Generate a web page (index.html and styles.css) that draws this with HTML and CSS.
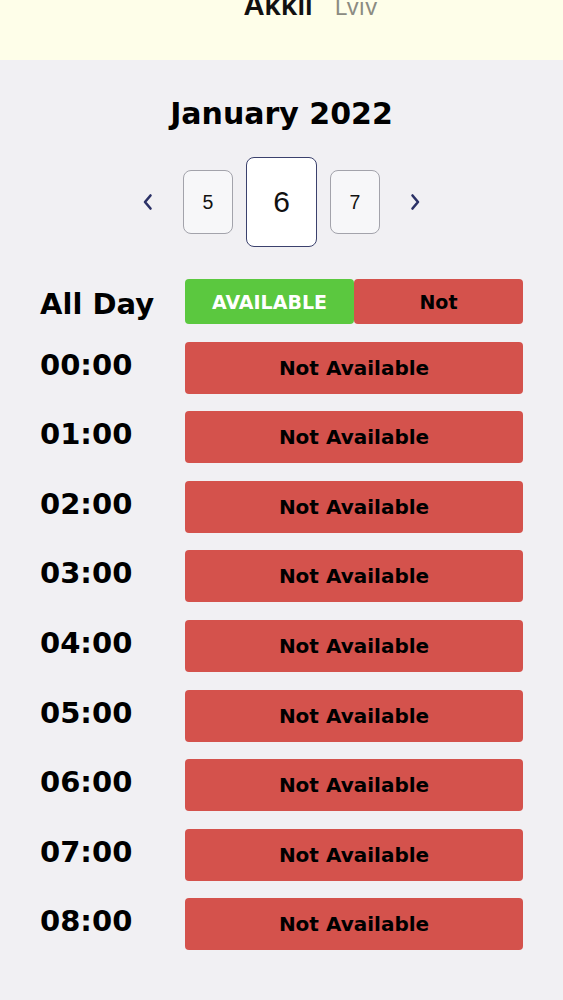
FILE: index.html
```html
<!DOCTYPE html>
<html lang="en">
<head>
<meta charset="utf-8">
<title>Availability</title>
<link rel="stylesheet" href="styles.css">
</head>
<body>
<header class="top">
  <div class="place">
    <span class="name">Akkii</span>
    <span class="city">Lviv</span>
  </div>
</header>
<main class="main">
  <h1 class="month">January 2022</h1>
  <div class="days">
    <button class="arrow arrow-prev" aria-label="Previous">
      <svg width="12" height="18" viewBox="0 0 12 18"><path d="M8.5 2.5 L3 9 L8.5 15.5" fill="none" stroke="#2b3166" stroke-width="2.6" stroke-linecap="round" stroke-linejoin="round"/></svg>
    </button>
    <div class="day">5</div>
    <div class="day day-sel">6</div>
    <div class="day">7</div>
    <button class="arrow arrow-next" aria-label="Next">
      <svg width="12" height="18" viewBox="0 0 12 18"><path d="M3.5 2.5 L9 9 L3.5 15.5" fill="none" stroke="#2b3166" stroke-width="2.6" stroke-linecap="round" stroke-linejoin="round"/></svg>
    </button>
  </div>
  <div class="slots">
    <div class="row row-all">
      <div class="label">All Day</div>
      <div class="toggle">
        <div class="tbtn tbtn-on">AVAILABLE</div>
        <div class="tbtn tbtn-off">Not</div>
      </div>
    </div>
    <div class="row"><div class="label">00:00</div><div class="slot">Not Available</div></div>
    <div class="row"><div class="label">01:00</div><div class="slot">Not Available</div></div>
    <div class="row"><div class="label">02:00</div><div class="slot">Not Available</div></div>
    <div class="row"><div class="label">03:00</div><div class="slot">Not Available</div></div>
    <div class="row"><div class="label">04:00</div><div class="slot">Not Available</div></div>
    <div class="row"><div class="label">05:00</div><div class="slot">Not Available</div></div>
    <div class="row"><div class="label">06:00</div><div class="slot">Not Available</div></div>
    <div class="row"><div class="label">07:00</div><div class="slot">Not Available</div></div>
    <div class="row"><div class="label">08:00</div><div class="slot">Not Available</div></div>
  </div>
</main>
</body>
</html>
```
FILE: styles.css
```css
html, body {
  margin: 0;
  padding: 0;
}
body {
  background: #f1f0f3;
  font-family: "DejaVu Sans", "Inter", sans-serif;
  color: #000;
  overflow: hidden;
}
.top {
  height: 60px;
  background: #fefee9;
  overflow: hidden;
}
.place {
  display: flex;
  justify-content: center;
  align-items: baseline;
  gap: 22px;
  margin-top: -10px;
  line-height: 30px;
  padding-left: 58px;
  font-family: "Inter", "DejaVu Sans", sans-serif;
}
.name {
  font-size: 29px;
  font-weight: 600;
  color: #111;
}
.city {
  font-size: 23px;
  font-weight: 400;
  color: #8b8b82;
}
.main {
  padding: 0 40px;
}
.month {
  margin: 0;
  padding-top: 36px;
  text-align: center;
  font-size: 30px;
  font-weight: 700;
  line-height: 36px;
}
.days {
  display: flex;
  justify-content: center;
  align-items: center;
  gap: 13px;
  margin-top: 25px;
}
.arrow {
  border: 0;
  background: none;
  padding: 0;
  width: 20px;
  height: 30px;
  display: flex;
  align-items: center;
  justify-content: center;
}
.arrow-prev {
  margin-right: 12px;
}
.arrow-next {
  margin-left: 12px;
}
.day {
  width: 48px;
  height: 62px;
  border: 1.5px solid #a3a3ab;
  border-radius: 8px;
  background: #f7f7f9;
  display: flex;
  align-items: center;
  justify-content: center;
  font-family: "Liberation Sans", Arial, sans-serif;
  font-size: 19.5px;
  color: #111;
}
.day-sel {
  width: 69px;
  height: 88px;
  border-color: #3b416d;
  background: #fff;
  font-size: 30px;
}
.slots {
  margin-top: 32px;
  display: flex;
  flex-direction: column;
  gap: 17.6px;
}
.row {
  display: flex;
  align-items: center;
}
.label {
  width: 145px;
  flex: none;
  font-size: 29px;
  font-weight: 700;
  line-height: 36px;
  margin-top: -6px;
}
.row-all .label {
  margin-top: 4px;
}
.toggle {
  flex: 1;
  display: flex;
  height: 45px;
}
.tbtn {
  flex: 1;
  display: flex;
  align-items: center;
  justify-content: center;
  font-size: 19px;
  font-weight: 700;
  border-radius: 4px;
}
.tbtn-on {
  background: #5bc83f;
  color: #fff;
}
.tbtn-off {
  background: #d4524c;
  color: #000;
}
.slot {
  flex: 1;
  height: 52px;
  border-radius: 4px;
  background: #d4524c;
  display: flex;
  align-items: center;
  justify-content: center;
  font-size: 20px;
  font-weight: 700;
}
```
